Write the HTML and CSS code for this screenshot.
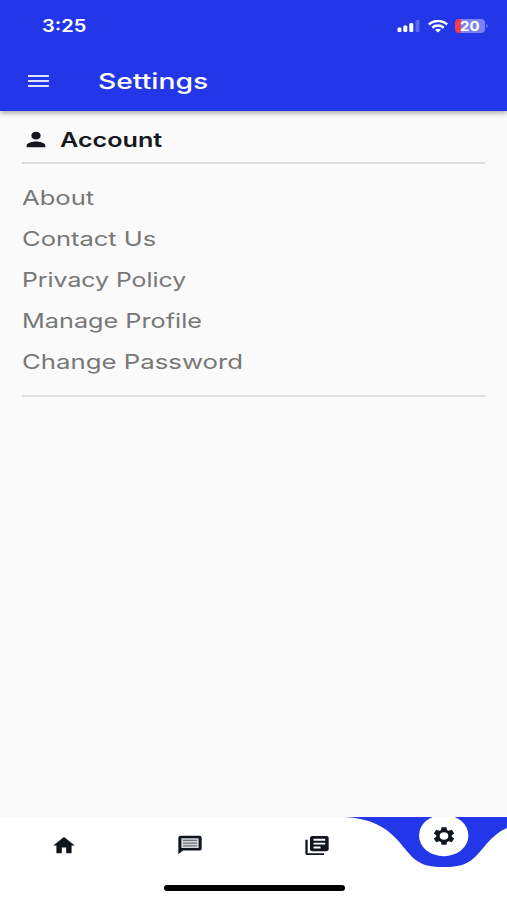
FILE: index.html
```html
<!DOCTYPE html>
<html lang="en">
<head>
<meta charset="utf-8">
<title>Settings</title>
<link rel="stylesheet" href="styles.css">
</head>
<body>
<div class="screen">
  <header class="header">
    <div class="status">
      <span class="time">3:25</span>
      <svg class="signal" width="24" height="14" viewBox="0 0 24 14" fill="#fff"><rect x="0.5" y="8.5" width="4" height="4.5" rx="1.2"/><rect x="6.3" y="6.5" width="4" height="6.5" rx="1.2"/><rect x="12.3" y="4" width="4" height="9" rx="1.2"/><rect x="18.5" y="1" width="4" height="12" rx="1.2" opacity=".25"/></svg>
      <svg class="wifi" width="20" height="13" viewBox="0 0 20 13" fill="none" stroke="#fff" stroke-width="2.5"><path d="M.9 4.5C6-.2 14-.2 19.100 4.500"/><path d="M4.300 7.700C7.500 4.900 12.500 4.900 15.700 7.700"/><path d="M7 9.800Q10 7.800 13 9.800L10 12.600Z" fill="#fff" stroke="none"/></svg>
      <div class="battery"><span class="level">20</span></div>
    </div>
    <div class="appbar">
      <div class="menu"><i></i><i></i><i></i></div>
      <h1 class="title">Settings</h1>
    </div>
  </header>
  <main class="content">
    <div class="section">
      <svg class="person" viewBox="0 0 24 24" preserveAspectRatio="none"><path d="M12 12c2.210 0 4-1.790 4-4s-1.790-4-4-4-4 1.790-4 4 1.790 4 4 4zm0 2c-2.670 0-8 1.340-8 4v2h16v-2c0-2.660-5.330-4-8-4z"/></svg>
      <h2 class="heading">Account</h2>
    </div>
    <ul class="list">
      <li><span class="about">About</span></li>
      <li><span class="contact">Contact Us</span></li>
      <li><span class="privacy">Privacy Policy</span></li>
      <li><span class="manage">Manage Profile</span></li>
      <li><span class="password">Change Password</span></li>
    </ul>
  </main>
  <nav class="nav">
    <svg class="curve" width="164" height="51" viewBox="343 817 164 51"><path fill="#2337e9" d="M343 817C372 818 388 828 401 844S419 867 443.700 867S473.400 860 486.400 844Q497 832 507 828V817Z"/><ellipse cx="443.700" cy="835.500" rx="24.700" ry="20.700" fill="#fff"/></svg>
    <div class="tabs">
      <div class="tab"><svg class="home" viewBox="0 0 24 24" preserveAspectRatio="none"><path d="M10 20v-6h4v6h5v-8h3L12 3 2 12h3v8z"/></svg></div>
      <div class="tab"><svg class="chat" viewBox="0 0 24 24" preserveAspectRatio="none"><path d="M4 4h16v12H4z" fill="#d5d7db"/><path d="M4 2h16q2 0 2 2v12q0 2-2 2H6l-4 4V4q0-2 2-2zm.6 2.600v10.800h14.800V4.600z" fill-rule="evenodd"/><path d="M6 6.200h12v1.300H6zm0 3.100h12v1.300H6zm0 3.100h12v1.300H6z" fill="#6d727a"/></svg></div>
      <div class="tab"><svg class="library" viewBox="0 0 24 24" preserveAspectRatio="none"><path d="M4 6H2v14c0 1.100.9 2 2 2h14v-2H4V6zm16-4H8c-1.100 0-2 .9-2 2v12c0 1.100.9 2 2 2h12c1.100 0 2-.9 2-2V4c0-1.100-.9-2-2-2zm-1 9H9V9h10v2zm-4 4H9v-2h6v2zm4-8H9V5h10v2z"/></svg></div>
      <div class="tab active"><svg class="gear" viewBox="0 0 24 24" preserveAspectRatio="none"><path d="M19.140 12.940c.04-.3.060-.61.060-.94 0-.32-.02-.64-.07-.94l2.030-1.580c.18-.14.230-.41.120-.61l-1.920-3.320c-.12-.22-.37-.29-.59-.22l-2.390.96c-.5-.38-1.030-.7-1.620-.94l-.36-2.540c-.04-.24-.24-.41-.48-.41h-3.840c-.24 0-.43.170-.47.410l-.36 2.540c-.59.240-1.130.570-1.620.940l-2.390-.96c-.22-.08-.47 0-.59.220L2.740 8.870c-.12.210-.08.470.120.610l2.030 1.580c-.05.3-.09.630-.09.940s.02.640.070.940l-2.030 1.580c-.18.140-.23.410-.12.610l1.920 3.320c.12.220.37.290.59.220l2.390-.96c.5.380 1.030.7 1.620.940l.36 2.540c.05.240.24.410.48.410h3.840c.24 0 .44-.17.470-.41l.36-2.540c.59-.24 1.130-.56 1.620-.94l2.390.96c.22.080.47 0 .59-.22l1.920-3.320c.12-.22.070-.47-.12-.61l-2.010-1.580zM12 16a4 4 0 1 1 0-8 4 4 0 0 1 0 8z"/></svg></div>
    </div>
    <div class="indicator"></div>
  </nav>
</div>
</body>
</html>
```
FILE: styles.css
```css
* { box-sizing: border-box; }
body { margin: 0; font-family: Inter, "Open Sans", sans-serif; }
h1, h2, ul { margin: 0; padding: 0; }
svg { display: block; flex: none; }
.screen { display: flex; flex-direction: column; width: 507px; height: 900px; background: #fafafa; overflow: hidden; }
.header { height: 111px; background: #2337e9; color: #fff; box-shadow: 0 2px 5px rgba(0, 0, 0, .35); }
.status { display: flex; align-items: center; height: 52px; padding: 0 22px 0 42px; }
.time, .title, .heading, .list span, .level { display: inline-block; transform-origin: left center; white-space: nowrap; }
.time { font-size: 17px; font-weight: 600; transform: scaleX(1.18); margin-right: auto; }
.signal { margin-right: 7px; }
.wifi { margin-right: 7px; }
.battery { position: relative; width: 30px; height: 14px; border-radius: 4px; background: linear-gradient(90deg, #f23c4c 6px, #7b82f3 6px); }
.battery::after { content: ""; position: absolute; left: 31px; top: 5px; width: 2px; height: 4px; border-radius: 0 2px 2px 0; background: #5964ee; }
.level { display: block; margin-left: 5px; font-size: 13px; line-height: 14px; font-weight: 700; transform: scaleX(1.15); }
.appbar { display: flex; align-items: center; height: 57px; padding-left: 28px; }
.menu { display: flex; flex-direction: column; gap: 3px; width: 21px; margin-right: 49px; }
.menu i { height: 2px; background: #dfe3ff; }
.title { font-size: 22px; line-height: 30px; font-weight: 500; transform: scaleX(1.285); }
.content { flex: 1; padding: 6px 22px 0; }
.section { display: flex; align-items: center; height: 47px; border-bottom: 2px solid #dedede; color: #15181e; }
.person { width: 28px; height: 23px; margin-right: 10px; fill: #15181e; }
.heading { font-size: 20px; line-height: 28px; font-weight: 600; transform: scaleX(1.257); }
.list { list-style: none; height: 233px; padding-top: 14px; border-bottom: 2px solid #dedede; color: #777; }
.list li { height: 41px; font-size: 20px; line-height: 41px; }
.list .about { transform: scaleX(1.28); }
.list .contact { transform: scaleX(1.275); }
.list .privacy { transform: scaleX(1.24); }
.list .manage { transform: scaleX(1.262); }
.list .password { transform: scaleX(1.288); }
.nav { position: relative; height: 83px; background: #fff; }
.curve { position: absolute; right: 0; top: 0; }
.tabs { position: relative; display: grid; grid-template-columns: repeat(4, 1fr); height: 56px; }
.tab { display: flex; align-items: center; justify-content: center; }
.tab svg { fill: #11151d; }
.home { width: 26px; height: 23px; margin-left: 2px; }
.chat { width: 28px; height: 22px; }
.library { width: 28px; height: 23px; margin-left: 1px; }
.gear { width: 26px; height: 22px; }
.active { padding-bottom: 18px; }
.indicator { width: 181px; height: 6px; margin: 12px 0 0 164px; border-radius: 3px; background: #000; }
```
